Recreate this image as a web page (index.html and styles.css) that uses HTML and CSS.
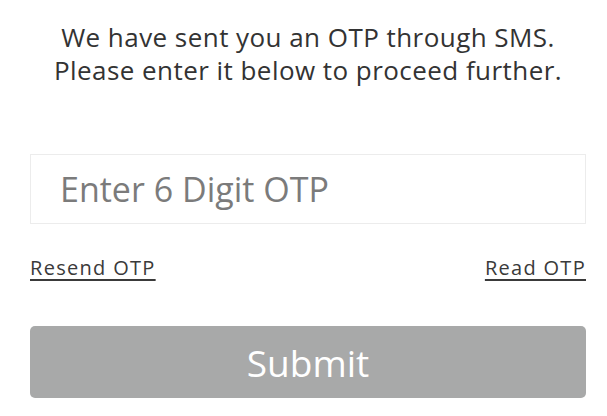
FILE: index.html
```html
<!DOCTYPE html>
<html lang="en">
<head>
	<meta charset="UTF-8">
	<title>OTP</title>
	<link rel="stylesheet" href="styles.css">
</head>
<body>
	<div class="otp">
		<p class="msg">We have sent you an OTP through SMS.<br>Please enter it below to proceed further.</p>
		<div class="field">
			<input type="text" placeholder="Enter 6 Digit OTP">
		</div>
		<div class="links">
			<a href="#">Resend OTP</a>
			<a href="#">Read OTP</a>
		</div>
		<button class="submit">Submit</button>
	</div>
</body>
</html>
```

FILE: styles.css
```css
body{
	margin: 0;
	background: #fff;
	font-family: "Open Sans", "Noto Sans", sans-serif;
}
.otp{
	width: 556px;
	margin: 0 0 0 30px;
	padding-top: 21px;
}
.msg{
	margin: 0;
	text-align: center;
	font-size: 26px;
	line-height: 33px;
	letter-spacing: 0.45px;
	color: #333;
}
.field{
	margin-top: 67px;
	height: 70px;
	border: 1px solid #ececec;
	box-sizing: border-box;
	display: flex;
	align-items: center;
}
.field input{
	border: 0;
	outline: none;
	width: 100%;
	padding: 0 0 0 29px;
	font-family: inherit;
	font-size: 34px;
	color: #777;
	background: transparent;
}
.field input::placeholder{
	color: #7b7b7b;
}
.links{
	display: flex;
	justify-content: space-between;
	margin-top: 30px;
}
.links a{
	font-size: 20px;
	letter-spacing: 1.3px;
	color: #3a3a3a;
	text-decoration: underline;
	text-underline-offset: 4px;
}
.submit{
	display: block;
	width: 556px;
	height: 72px;
	margin-top: 45px;
	border: 0;
	border-radius: 5px;
	background: #a8a9a9;
	color: #fff;
	font-family: inherit;
	font-size: 37px;
	cursor: pointer;
}
```
